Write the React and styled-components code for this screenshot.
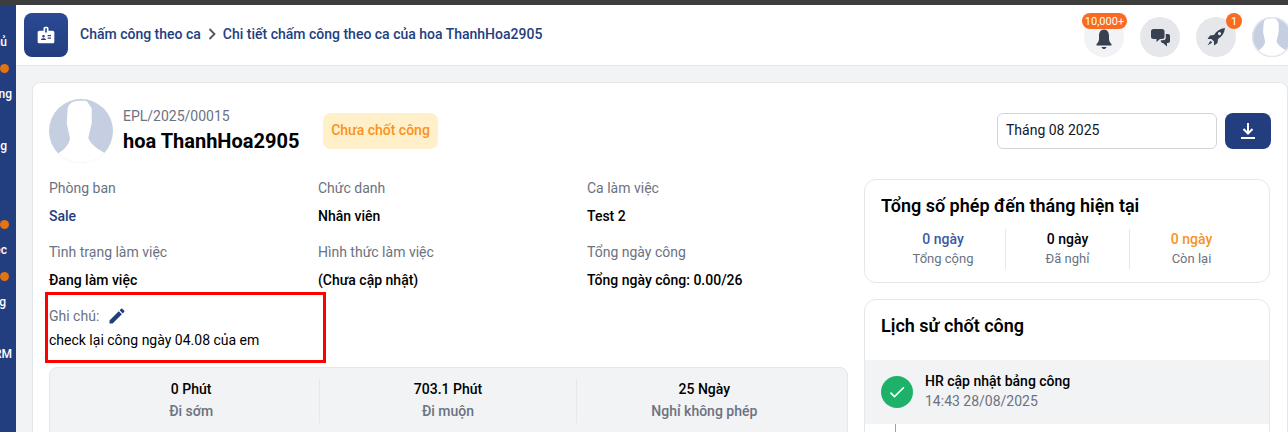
import React from "react";
import styled, { createGlobalStyle } from "styled-components";
import { MdBadge, MdEdit, MdCheck } from "react-icons/md";

const GlobalStyle = createGlobalStyle`
  html, body { margin: 0; padding: 0; background: #f2f3f5; }
  * { box-sizing: border-box; }
  body { font-family: Roboto, "Liberation Sans", sans-serif; font-size: 14px; line-height: 20px; color: #000; }
`;

const Page = styled.div`
  width: 1288px;
  height: 432px;
  overflow: hidden;
  border-top: 5px solid #3d3d3d;
  display: flex;
`;

const Sidebar = styled.aside`
  width: 16px;
  flex: none;
  background: #233e7f;
  padding-top: 24px;
  display: grid;
  grid-auto-rows: 26px;
  overflow: hidden;
`;

const NavRow = styled.div`
  display: flex;
  justify-content: flex-end;
  align-items: center;
  padding-right: ${(p) => p.$inset || 0}px;
  overflow: hidden;
  white-space: nowrap;
  color: #fff;
  font-size: 12px;
  font-weight: 500;
`;

const NavText = styled.span`
  flex: none;
`;

const NavDot = styled.span`
  width: 9px;
  height: 9px;
  border-radius: 50%;
  background: #e5730f;
`;

const Main = styled.div`
  flex: 1;
  min-width: 0;
`;

const TopBar = styled.header`
  height: 61px;
  background: #fff;
  border-bottom: 1px solid #e5e7eb;
  padding: 8px 0 8px 8px;
  display: flex;
  align-items: center;
`;

const PageIcon = styled.div`
  width: 44px;
  height: 44px;
  border-radius: 8px;
  background: linear-gradient(180deg, #2a4a94, #233e7f);
  color: #fff;
  display: flex;
  align-items: center;
  justify-content: center;
  font-size: 20px;
  margin-right: 12px;
`;

const Crumbs = styled.nav`
  display: flex;
  align-items: center;
  gap: 7px;
  margin-top: -2px;
  color: #233e7f;
  font-weight: 500;
  flex: 1;
`;

const CrumbArrow = styled.svg`
  width: 8px;
  height: 12px;
  color: #4b5563;
`;

const TopActions = styled.div`
  display: flex;
  align-items: flex-end;
  gap: 16px;
  width: 204px;
  height: 44px;
  flex: none;
`;

const RoundButton = styled.div`
  width: 40px;
  height: 40px;
  flex: none;
  border-radius: 50%;
  background: ${(p) => p.$bg};
  color: #374151;
  display: flex;
  align-items: center;
  justify-content: center;
`;

const ActionSlot = styled.div`
  position: relative;
  flex: none;
`;

const CountBadge = styled.span`
  position: absolute;
  top: -4px;
  ${(p) => (p.$wide ? "left: -2px; width: 45px;" : "right: -6px; width: 16px;")}
  height: 16px;
  border-radius: 8px;
  background: #f96b20;
  color: #fff;
  font-size: 11px;
  line-height: 17px;
  text-align: center;
`;

const BellGlyph = styled.svg`
  width: 16px;
  height: 20px;
  margin-top: 4px;
`;

const ChatGlyph = styled.svg`
  width: 20px;
  height: 19px;
`;

const RocketGlyph = styled.svg`
  width: 18px;
  height: 18px;
`;

const Avatar = styled.svg`
  display: block;
  flex: none;
  width: ${(p) => p.$size}px;
  height: ${(p) => p.$size}px;
`;

const Content = styled.main`
  padding: 16px 0 0 16px;
`;

const Card = styled.section`
  background: #fff;
  border: 1px solid #e5e7eb;
  border-radius: 8px;
  padding: 16px;
`;

const ProfileRow = styled.div`
  display: flex;
  align-items: flex-start;
  height: 64px;
`;

const ProfileText = styled.div`
  margin-left: 10px;
  padding-top: 7px;
  width: 200px;
`;

const ProfileCode = styled.div`
  color: #6b7280;
`;

const ProfileName = styled.div`
  font-size: 20px;
  line-height: 28px;
  font-weight: 700;
  margin-top: 1px;
`;

const StatusBadge = styled.div`
  margin-top: 14px;
  height: 36px;
  width: 115px;
  padding-bottom: 2px;
  border-radius: 8px;
  background: #fff0c9;
  color: #f7931e;
  font-weight: 500;
  display: flex;
  align-items: center;
  justify-content: center;
`;

const PeriodBox = styled.div`
  margin: 14px 0 0 auto;
  width: 220px;
  height: 36px;
  border: 1px solid #d1d5db;
  border-radius: 6px;
  padding: 0 8px 2px;
  display: flex;
  align-items: center;
  color: #111827;
`;

const DownloadButton = styled.div`
  margin: 14px 0 0 8px;
  width: 46px;
  height: 36px;
  border-radius: 8px;
  background: #233e7f;
  color: #fff;
  display: flex;
  align-items: center;
  justify-content: center;
`;

const Columns = styled.div`
  display: grid;
  grid-template-columns: 799px 406px;
  gap: 16px;
  margin-top: 15px;
`;

const InfoGrid = styled.div`
  display: grid;
  grid-template-columns: repeat(3, 269px);
  row-gap: 16px;
`;

const Field = styled.div`
  display: grid;
  row-gap: 8px;
`;

const FieldLabel = styled.div`
  color: #6b7280;
`;

const FieldValue = styled.div`
  font-weight: 500;
  color: ${(p) => p.$color || "#000"};
`;

const NoteBlock = styled.div`
  position: relative;
  margin-top: 16px;
`;

const NoteHead = styled.div`
  display: flex;
  align-items: center;
  gap: 8px;
  color: #6b7280;
  margin-bottom: 4px;
`;

const EditIcon = styled.span`
  display: flex;
  color: #233e7f;
  font-size: 20px;
`;

const Annotation = styled.div`
  position: absolute;
  left: -4px;
  top: -14px;
  width: 281px;
  height: 71px;
  border: 3px solid #f00;
  pointer-events: none;
`;

const StatPanel = styled.div`
  margin-top: 17px;
  height: 80px;
  background: #f2f3f5;
  border: 1px solid #e5e7eb;
  border-radius: 8px;
  padding: 11px 15px 11px 13px;
  display: grid;
  grid-template-columns: repeat(3, 1fr);
`;

const StatCell = styled.div`
  height: 44px;
  text-align: center;
  border-left: ${(p) => (p.$first ? "0" : "1px solid #e5e7eb")};
`;

const StatValue = styled.div`
  font-weight: 500;
  color: ${(p) => p.$color || "#000"};
`;

const StatLabel = styled.div`
  color: #6b7280;
  font-weight: 500;
  margin-top: 2px;
`;

const SideColumn = styled.div`
  display: grid;
  row-gap: 16px;
  align-content: start;
  margin-top: 1px;
`;

const SideCard = styled.section`
  border: 1px solid #e5e7eb;
  border-radius: 12px 12px 0 0;
  background: #fff;
  overflow: hidden;
  ${(p) => p.$closed && "border-radius: 12px; height: 104px;"}
`;

const SideTitle = styled.h3`
  margin: 0;
  padding: 13px 16px 0;
  font-size: 18px;
  line-height: 26px;
  font-weight: 600;
`;

const LeaveRow = styled.div`
  display: grid;
  grid-template-columns: repeat(3, 1fr);
  margin: 10px 16px 0;
`;

const LeaveCell = styled.div`
  height: 40px;
  text-align: center;
  border-left: ${(p) => (p.$first ? "0" : "1px solid #e5e7eb")};
`;

const LeaveLabel = styled.div`
  color: #6b7280;
  font-size: 13px;
`;

const HistoryRow = styled.div`
  margin-top: 21px;
  height: 64px;
  background: #f2f3f5;
  padding: 0 16px;
  display: flex;
  align-items: center;
  gap: 12px;
`;

const CheckCircle = styled.div`
  width: 32px;
  height: 32px;
  border-radius: 50%;
  background: #1eb16a;
  color: #fff;
  font-size: 20px;
  display: flex;
  align-items: center;
  justify-content: center;
`;

const HistoryTitle = styled.div`
  font-weight: 500;
  margin-top: -2px;
`;

const HistoryTime = styled.div`
  color: #6b7280;
`;

const Timeline = styled.div`
  width: 1px;
  height: 40px;
  margin-left: 30px;
  background: #9ca3af;
`;

function Person({ size, ring }) {
  return (
    <Avatar $size={size} viewBox="0 0 64 64">
      <defs>
        <clipPath id={`disc-${size}`}>
          <circle cx="32" cy="32" r="32" />
        </clipPath>
      </defs>
      <g clipPath={`url(#disc-${size})`}>
        <rect width="64" height="64" fill="#c5cfe1" />
        <path
          d="M24.3 2.8 C28 1.8 33 1.6 37.7 2 L42.7 9.3 V24 L39.3 39 C42 46 49 50 56 54.3 L64 64 H0 L9.3 54.3 C15 51 20 46 21 39.3 L17.7 24.3 L18.7 9 C19.5 6 21.5 4 24.3 2.8 Z"
          fill="#fff"
        />
      </g>
      {ring && <circle cx="32" cy="32" r="31" fill="none" stroke="#e5e7eb" strokeWidth="2" />}
    </Avatar>
  );
}

const navRows = [
  { text: "Trang chủ", inset: 9 },
  { dot: true },
  { text: "Tuyển dụng", inset: 4 },
  {},
  { text: "Bảng lương", inset: 9 },
  {},
  {},
  { dot: true },
  { text: "Công việc", inset: 9 },
  { dot: true },
  { text: "Khách hàng", inset: 10 },
  {},
  { text: "CRM", inset: 4 },
];

const fields = [
  { label: "Phòng ban", value: "Sale", color: "#233e7f" },
  { label: "Chức danh", value: "Nhân viên" },
  { label: "Ca làm việc", value: "Test 2" },
  { label: "Tình trạng làm việc", value: "Đang làm việc" },
  { label: "Hình thức làm việc", value: "(Chưa cập nhật)" },
  { label: "Tổng ngày công", value: "Tổng ngày công: 0.00/26" },
];

const stats = [
  { value: "0 Phút", label: "Đi sớm" },
  { value: "703.1 Phút", label: "Đi muộn" },
  { value: "25 Ngày", label: "Nghỉ không phép" },
];

const leave = [
  { value: "0 ngày", label: "Tổng cộng", color: "#3b5aa3" },
  { value: "0 ngày", label: "Đã nghỉ" },
  { value: "0 ngày", label: "Còn lại", color: "#f7931e" },
];

export default function App() {
  return (
    <Page>
      <GlobalStyle />
      <Sidebar>
        {navRows.map((row, i) => (
          <NavRow key={i} $inset={row.dot ? 7 : row.inset}>
            {row.dot && <NavDot />}
            {row.text && <NavText>{row.text}</NavText>}
          </NavRow>
        ))}
      </Sidebar>
      <Main>
        <TopBar>
          <PageIcon>
            <MdBadge />
          </PageIcon>
          <Crumbs>
            <span>Chấm công theo ca</span>
            <CrumbArrow viewBox="0 0 8 12">
              <path d="M1.5 1 L6.5 6 L1.5 11" fill="none" stroke="currentColor" strokeWidth="1.8" />
            </CrumbArrow>
            <span>Chi tiết chấm công theo ca của hoa ThanhHoa2905</span>
          </Crumbs>
          <TopActions>
            <ActionSlot>
              <RoundButton $bg="#f2f3f5">
                <BellGlyph viewBox="0 0 16 20" fill="currentColor">
                  <path d="M8 0.5 C4.5 0.5 3 3.5 3 7 V10 C3 12.5 1.5 14 0.5 15 V16.5 H15.5 V15 C14.5 14 13 12.5 13 10 V7 C13 3.5 11.5 0.5 8 0.5 Z" />
                  <path d="M5.5 18 H10.5 C10 19.5 9 20 8 20 S6 19.5 5.5 18 Z" />
                </BellGlyph>
              </RoundButton>
              <CountBadge $wide>10,000+</CountBadge>
            </ActionSlot>
            <RoundButton $bg="#e5e7eb">
              <ChatGlyph viewBox="0 0 20 19" fill="currentColor">
                <path d="M3.5 1 H12 Q14.5 1 14.5 3.5 V8.5 Q14.5 11 12 11 H10 L6.5 14 V11 H3.5 Q1 11 1 8.5 V3.5 Q1 1 3.5 1 Z" />
                <path d="M15.8 6 H18 Q20 6 20 8 V13 Q20 15 18 15 H17 V18.5 L13 15 H12 L10.7 13.2 L11 12.3 H13 Q15.8 12.3 15.8 9.5 Z" />
              </ChatGlyph>
            </RoundButton>
            <ActionSlot>
              <RoundButton $bg="#e5e7eb">
                <RocketGlyph viewBox="0 0 18 18" fill="currentColor">
                  <path
                    fillRule="evenodd"
                    d="M18 0 C13 0.5 9.5 3 7 7 L3 7.5 L0.5 11 L4.5 11 L7 13.5 L7 17.5 L10.5 15 L11 11 C15 8.5 17.5 5 18 0 Z M12.5 4 A1.6 1.6 0 1 0 12.5 7.2 A1.6 1.6 0 1 0 12.5 4 Z"
                  />
                  <path d="M3.5 12.8 L5.2 14.5 L0.5 17.5 Z" />
                </RocketGlyph>
              </RoundButton>
              <CountBadge>1</CountBadge>
            </ActionSlot>
            <Person size={40} ring />
          </TopActions>
        </TopBar>
        <Content>
          <Card>
            <ProfileRow>
              <Person size={64} />
              <ProfileText>
                <ProfileCode>EPL/2025/00015</ProfileCode>
                <ProfileName>hoa ThanhHoa2905</ProfileName>
              </ProfileText>
              <StatusBadge>Chưa chốt công</StatusBadge>
              <PeriodBox>Tháng 08 2025</PeriodBox>
              <DownloadButton>
                <svg width="16" height="18" viewBox="0 0 16 18">
                  <path d="M8 1 V11 M3.5 7 L8 11.5 L12.5 7" fill="none" stroke="currentColor" strokeWidth="2" />
                  <rect x="1" y="15" width="14" height="2" fill="currentColor" />
                </svg>
              </DownloadButton>
            </ProfileRow>
            <Columns>
              <div>
                <InfoGrid>
                  {fields.map((f) => (
                    <Field key={f.label}>
                      <FieldLabel>{f.label}</FieldLabel>
                      <FieldValue $color={f.color}>{f.value}</FieldValue>
                    </Field>
                  ))}
                </InfoGrid>
                <NoteBlock>
                  <NoteHead>
                    Ghi chú:
                    <EditIcon>
                      <MdEdit />
                    </EditIcon>
                  </NoteHead>
                  <div>check lại công ngày 04.08 của em</div>
                  <Annotation />
                </NoteBlock>
                <StatPanel>
                  {stats.map((s, i) => (
                    <StatCell key={s.label} $first={i === 0}>
                      <StatValue>{s.value}</StatValue>
                      <StatLabel>{s.label}</StatLabel>
                    </StatCell>
                  ))}
                </StatPanel>
              </div>
              <SideColumn>
                <SideCard $closed>
                  <SideTitle>Tổng số phép đến tháng hiện tại</SideTitle>
                  <LeaveRow>
                    {leave.map((l, i) => (
                      <LeaveCell key={l.label} $first={i === 0}>
                        <StatValue $color={l.color}>{l.value}</StatValue>
                        <LeaveLabel>{l.label}</LeaveLabel>
                      </LeaveCell>
                    ))}
                  </LeaveRow>
                </SideCard>
                <SideCard>
                  <SideTitle>Lịch sử chốt công</SideTitle>
                  <HistoryRow>
                    <CheckCircle>
                      <MdCheck />
                    </CheckCircle>
                    <div>
                      <HistoryTitle>HR cập nhật bảng công</HistoryTitle>
                      <HistoryTime>14:43 28/08/2025</HistoryTime>
                    </div>
                  </HistoryRow>
                  <Timeline />
                </SideCard>
              </SideColumn>
            </Columns>
          </Card>
        </Content>
      </Main>
    </Page>
  );
}
